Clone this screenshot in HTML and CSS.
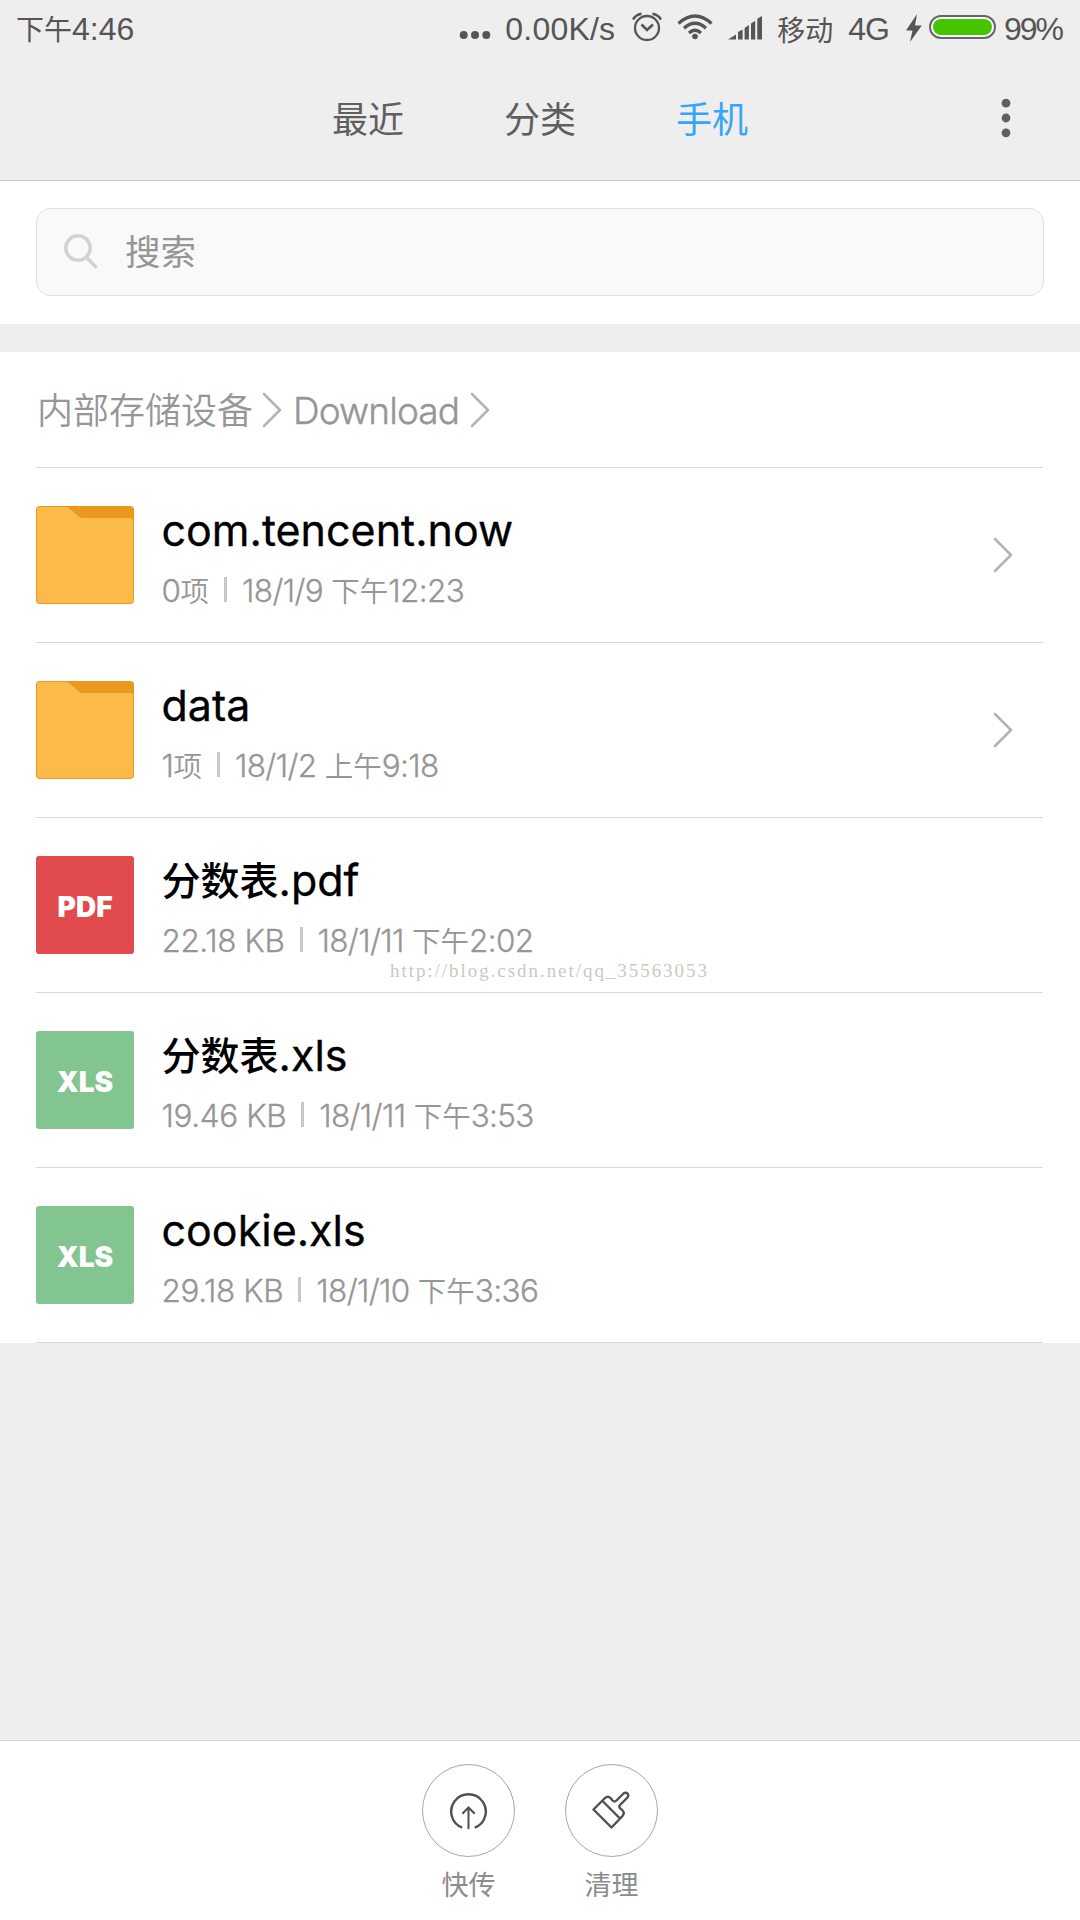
FILE: index.html
```html
<!DOCTYPE html>
<html lang="zh-CN">
<head>
    <meta charset="UTF-8">
    <meta name="viewport" content="width=device-width, initial-scale=1.0">
    <title>文件管理</title>
    <link rel="stylesheet" href="styles.css">
</head>
<body>
    <header class="header">
        <div class="status-bar">
            <span class="time"><span class="cn">下午</span>4:46</span>
            <div class="status-icons">
                <svg class="more" width="32" height="10" viewBox="0 0 32 10" fill="#555"><circle cx="4.7" cy="5" r="4"/><circle cx="16" cy="5" r="4"/><circle cx="27.3" cy="5" r="4"/></svg>
                <span class="speed">0.00K/s</span>
                <svg class="alarm" width="30" height="30" viewBox="0 0 30 30" fill="none" stroke="#555" stroke-width="2.3">
                    <circle cx="15" cy="16" r="12"/>
                    <path d="M9.5 12.5l5.5 5.5 6-5.5" stroke-width="2.6"/>
                    <path d="M1 7.5Q3.5 3 9.5 1.8M29 7.5Q26.5 3 20.5 1.8" stroke-width="2.6"/>
                </svg>
                <svg class="wifi" width="36" height="26" viewBox="0 0 36 26" fill="none" stroke="#555" stroke-width="3.4">
                    <path d="M1.5 9.5Q18 -5.5 34.5 9.5M7 14.2Q18 4.5 29 14.2M12 19Q18 13.5 24 19"/>
                    <circle cx="18" cy="22.5" r="2.8" fill="#555" stroke="none"/>
                </svg>
                <svg class="signal" width="34" height="24" viewBox="0 0 34 24" fill="#555"><path d="M0 23.5L8 18.5V23.5zM10 16l4.6-2.5v10H10zM16.6 12l4.3-3v14.5h-4.3zM23 7.5l4.2-2.7v18.7H23zM29.3 2.8L34 0v23.5h-4.7z"/></svg>
                <span class="cn carrier">移动</span>
                <span class="network">4G</span>
                <svg class="bolt" width="16" height="28" viewBox="0 0 16 28" fill="#555"><path d="M11 0L0 16.5h6.5L4 28 15.8 11.5H9z"/></svg>
                <div class="battery"><div class="battery-level"></div></div>
                <span class="percent">99%</span>
            </div>
        </div>
        <nav class="tabs">
            <a class="tab">最近</a>
            <a class="tab">分类</a>
            <a class="tab active">手机</a>
            <svg class="menu-btn" width="10" height="40" viewBox="0 0 10 40" fill="#606060"><circle cx="5" cy="5.2" r="4.4"/><circle cx="5" cy="20" r="4.4"/><circle cx="5" cy="34.8" r="4.4"/></svg>
        </nav>
    </header>

    <div class="search-area">
        <div class="search-box">
            <svg width="34" height="36" viewBox="0 0 34 36" fill="none" stroke="#d3d3d3" stroke-width="3.6" stroke-linecap="round"><circle cx="14" cy="15" r="12.2"/><path d="M23 25l8.5 8.5"/></svg>
            <span>搜索</span>
        </div>
    </div>

    <main class="files">
        <div class="breadcrumb">
            <span class="crumb-cn">内部存储设备</span>
            <svg class="chevron" width="20" height="36" viewBox="0 0 20 36"><path d="M2 2l16 16L2 34"/></svg>
            <span class="crumb-en">Download</span>
            <svg class="chevron" width="20" height="36" viewBox="0 0 20 36"><path d="M2 2l16 16L2 34"/></svg>
        </div>

        <div class="row">
            <svg class="icon" width="98" height="98" viewBox="0 0 98 98">
                <rect width="98" height="98" rx="4" fill="#ea991c"/>
                <path d="M1 4q0-3 3-3h26q2 0 4 2l9 7.5q2 1.5 4 1.5h47q3 0 3 3v79q0 3-3 3H4q-3 0-3-3z" fill="#fcba4a"/>
            </svg>
            <div class="info">
                <div class="name">com.tencent.now</div>
                <div class="meta"><span class="size">0<span class="cn">项</span></span><i class="sep"></i><span>18/1/9 <span class="cn">下午</span>12:23</span></div>
            </div>
            <svg class="chevron" width="20" height="36" viewBox="0 0 20 36"><path d="M2 2l16 16L2 34"/></svg>
        </div>
        <div class="row">
            <svg class="icon" width="98" height="98" viewBox="0 0 98 98">
                <rect width="98" height="98" rx="4" fill="#ea991c"/>
                <path d="M1 4q0-3 3-3h26q2 0 4 2l9 7.5q2 1.5 4 1.5h47q3 0 3 3v79q0 3-3 3H4q-3 0-3-3z" fill="#fcba4a"/>
            </svg>
            <div class="info">
                <div class="name">data</div>
                <div class="meta"><span class="size">1<span class="cn">项</span></span><i class="sep"></i><span>18/1/2 <span class="cn">上午</span>9:18</span></div>
            </div>
            <svg class="chevron" width="20" height="36" viewBox="0 0 20 36"><path d="M2 2l16 16L2 34"/></svg>
        </div>
        <div class="row">
            <div class="icon pdf">PDF</div>
            <div class="info">
                <div class="name"><span class="cn">分数表</span>.pdf</div>
                <div class="meta"><span class="size">22.18 KB</span><i class="sep"></i><span>18/1/11 <span class="cn">下午</span>2:02</span></div>
            </div>
            <div class="watermark">http://blog.csdn.net/qq_35563053</div>
        </div>
        <div class="row">
            <div class="icon xls">XLS</div>
            <div class="info">
                <div class="name"><span class="cn">分数表</span>.xls</div>
                <div class="meta"><span class="size">19.46 KB</span><i class="sep"></i><span>18/1/11 <span class="cn">下午</span>3:53</span></div>
            </div>
        </div>
        <div class="row">
            <div class="icon xls">XLS</div>
            <div class="info">
                <div class="name">cookie.xls</div>
                <div class="meta"><span class="size">29.18 KB</span><i class="sep"></i><span>18/1/10 <span class="cn">下午</span>3:36</span></div>
            </div>
        </div>
    </main>

    <footer class="toolbar">
        <div class="tool">
            <div class="circle">
                <svg width="40" height="40" viewBox="0 0 40 40" fill="none" stroke="#505050" stroke-width="2.4">
                    <path d="M13.2 36.7A17.3 17.3 0 1 1 25.8 36.7"/>
                    <path d="M19.5 38V16.5M13.3 22.8l6.2-6.3 6.2 6.3" stroke-width="2"/>
                </svg>
            </div>
            <span>快传</span>
        </div>
        <div class="tool">
            <div class="circle">
                <svg width="40" height="40" viewBox="0 0 40 40" fill="none" stroke="#505050" stroke-width="2.4" stroke-linejoin="round">
                    <path d="M1.5 18.5L13 7q3-2.500 5.500 0l2 2.500q2 2 4 0l7-7q2.500-1.500 4 0t0 4l-7.500 7.500q-1.500 2 .5 3.500l2 2q2.500 2.500 0 5.500L19.500 36.500z"/>
                    <path d="M10.500 10l17 17"/>
                </svg>
            </div>
            <span>清理</span>
        </div>
    </footer>
</body>
</html>
```
FILE: styles.css
```css
* {
    box-sizing: border-box;
}
body {
    margin: 0;
    width: 1080px;
    height: 1920px;
    display: flex;
    flex-direction: column;
    background: #eee;
    font-family: Inter, "Noto Sans CJK SC", sans-serif;
    overflow: hidden;
}
svg {
    display: block;
    flex: none;
}
.cn {
    font-family: "Noto Sans CJK SC", sans-serif;
    line-height: 0;
    letter-spacing: 0;
}

/* header */
.header {
    height: 181px;
    border-bottom: 1px solid #c8c8c8;
}
.status-bar {
    height: 56px;
    padding: 1px 18px 0 16px;
    display: flex;
    justify-content: space-between;
    align-items: center;
    font-family: "Liberation Sans", "Noto Sans CJK SC", sans-serif;
    font-size: 32px;
    line-height: 56px;
    color: #555;
    white-space: nowrap;
}
.status-bar .cn {
    font-size: 28px;
}
.status-icons {
    display: flex;
    align-items: center;
}
.more {
    margin: 12px 14px 0 0;
}
.speed {
    letter-spacing: 0.2px;
}
.alarm {
    margin: -4px 0 0 17px;
}
.wifi {
    margin: -4px 0 0 15px;
}
.signal {
    margin: -2px 0 0 15px;
}
.carrier {
    margin-left: 15px;
}
.network {
    margin-left: 15px;
    letter-spacing: -1px;
}
.bolt {
    margin: -2px 0 0 17px;
}
.battery {
    width: 67px;
    height: 24px;
    margin: -3px 8px 0 7px;
    padding: 2px;
    border: 2px solid #666;
    border-radius: 12px;
    background: #fff;
}
.battery-level {
    height: 16px;
    border-radius: 8px;
    background: #47c400;
}
.percent {
    letter-spacing: -2px;
}
.tabs {
    position: relative;
    height: 124px;
    padding-top: 38px;
    display: flex;
    justify-content: center;
    gap: 100px;
}
.tab {
    width: 72px;
    font-size: 36px;
    line-height: 52px;
    color: #5f5f5f;
}
.tab.active {
    color: #35a5fa;
}
.menu-btn {
    position: absolute;
    right: 69px;
    top: 42px;
}

/* search */
.search-area {
    height: 143px;
    padding: 27px 36px 0;
    background: #fff;
}
.search-box {
    height: 88px;
    padding: 0 0 2px 27px;
    display: flex;
    align-items: center;
    gap: 27px;
    border: 1px solid #e3e3e3;
    border-radius: 14px;
    background: #f9f9f9;
    font-size: 35.5px;
    line-height: 50px;
    color: #969696;
}
.search-box span {
    margin-top: 3px;
}

/* file list */
.files {
    margin-top: 28px;
    background: #fff;
    padding: 0 37px 0 36px;
}
.breadcrumb {
    height: 116px;
    display: flex;
    align-items: center;
    border-bottom: 1px solid #d8d8d8;
    font-size: 36px;
    font-weight: 350;
    line-height: 50px;
    color: #969696;
}
.crumb-cn {
    margin: 2px 9px 0 1px;
}
.crumb-en {
    margin: 2px 11px 0 11px;
    font-size: 37px;
    letter-spacing: -0.9px;
    -webkit-text-stroke: 0.4px #969696;
}
.chevron path {
    fill: none;
    stroke: #b2b2b2;
    stroke-width: 2.5;
    stroke-linecap: round;
}
.row {
    position: relative;
    height: 175px;
    padding: 38px 30px 0 0;
    display: flex;
    border-bottom: 1px solid #d8d8d8;
}
.row .chevron {
    margin-top: 31px;
}
.icon {
    width: 98px;
    height: 98px;
    margin-right: 27.5px;
}
.pdf, .xls {
    border-radius: 3px;
    font-size: 28px;
    font-weight: 900;
    line-height: 103px;
    text-align: center;
    color: #fff;
}
.pdf {
    background: #e14b4e;
}
.xls {
    background: #82c590;
}
.info {
    flex: 1;
    white-space: nowrap;
}
.name {
    margin-top: -1px;
    font-size: 43px;
    line-height: 50px;
    color: #000;
    -webkit-text-stroke: 0.3px #000;
}
.name .cn {
    position: relative;
    top: -1px;
    font-size: 39px;
    font-weight: 500;
    -webkit-text-stroke: 0;
}
.meta {
    margin-top: 18px;
    display: flex;
    font-size: 31.5px;
    font-weight: 350;
    line-height: 36px;
    color: #969696;
    letter-spacing: -0.65px;
    -webkit-text-stroke: 0.3px #969696;
}
.size {
    letter-spacing: -0.4px;
}
.meta .cn {
    font-size: 28.5px;
    -webkit-text-stroke: 0;
}
.sep {
    width: 3px;
    height: 25px;
    margin: 4px 15px 0;
    background: #c8c8c8;
}
.watermark {
    position: absolute;
    left: 354px;
    top: 141px;
    font-family: "Liberation Serif", serif;
    font-size: 19px;
    line-height: 24px;
    letter-spacing: 1.95px;
    color: #cbc8c0;
}

/* bottom toolbar */
.toolbar {
    height: 180px;
    margin-top: auto;
    padding-top: 23px;
    display: flex;
    justify-content: center;
    gap: 50px;
    border-top: 1px solid #d3d3d3;
    background: #fff;
}
.tool {
    display: flex;
    flex-direction: column;
    align-items: center;
    font-size: 27px;
    line-height: 38px;
    color: #8c8c8c;
}
.circle {
    width: 93px;
    height: 93px;
    margin-bottom: 10px;
    display: flex;
    justify-content: center;
    align-items: center;
    border: 1px solid #a5a5a5;
    border-radius: 50%;
}
```
